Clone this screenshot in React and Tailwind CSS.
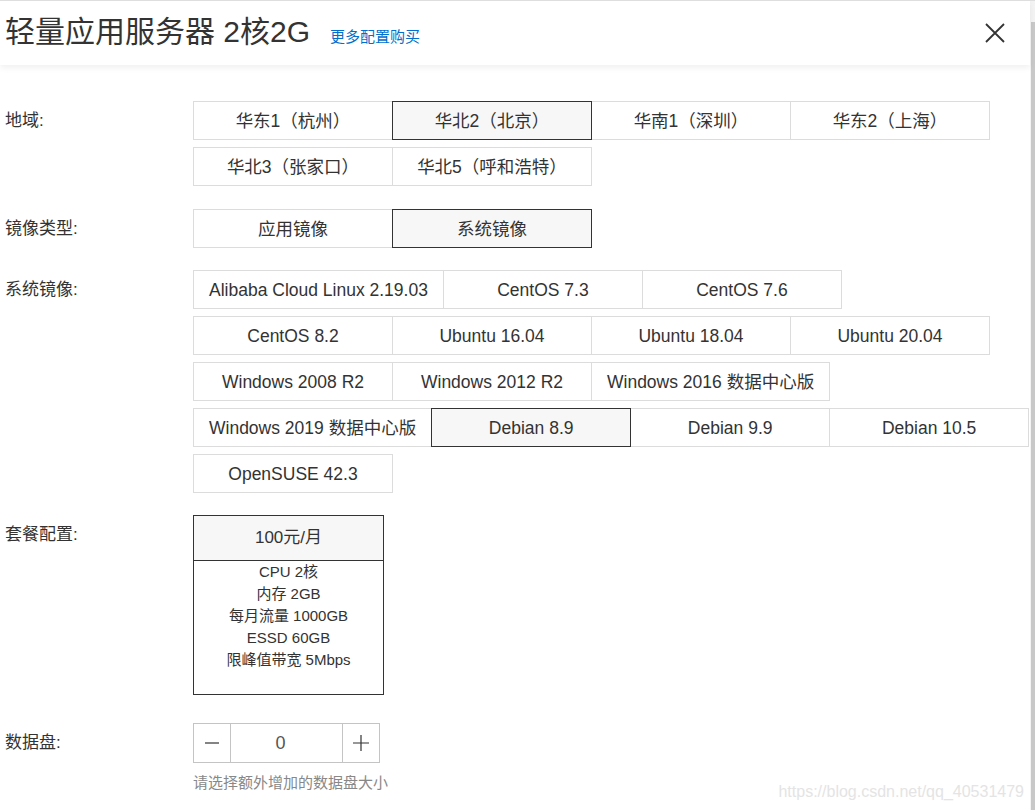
import React from 'react'

const font = { fontFamily: '"Liberation Sans", "Noto Sans CJK SC", sans-serif' }

const regions = [
  [
    ['华东1（杭州）', false],
    ['华北2（北京）', true],
    ['华南1（深圳）', false],
    ['华东2（上海）', false],
  ],
  [
    ['华北3（张家口）', false],
    ['华北5（呼和浩特）', false],
  ],
]

const imageTypes = [
  [
    ['应用镜像', false],
    ['系统镜像', true],
  ],
]

const systems = [
  [
    ['Alibaba Cloud Linux 2.19.03', false],
    ['CentOS 7.3', false],
    ['CentOS 7.6', false],
  ],
  [
    ['CentOS 8.2', false],
    ['Ubuntu 16.04', false],
    ['Ubuntu 18.04', false],
    ['Ubuntu 20.04', false],
  ],
  [
    ['Windows 2008 R2', false],
    ['Windows 2012 R2', false],
    ['Windows 2016 数据中心版', false],
  ],
  [
    ['Windows 2019 数据中心版', false],
    ['Debian 8.9', true],
    ['Debian 9.9', false],
    ['Debian 10.5', false],
  ],
  [['OpenSUSE 42.3', false]],
]

function Option({ label, active }) {
  return (
    <div
      className={
        'relative -mr-px h-[39px] min-w-[200px] px-[15px] pt-[2px] flex items-center justify-center whitespace-nowrap text-[17.5px] text-[#333] border ' +
        (active ? 'z-10 border-[#333] bg-[#f7f7f7]' : 'border-[#dcdcdc] bg-white')
      }
    >
      {label}
    </div>
  )
}

function Row({ label, className = '', children }) {
  return (
    <div className={'flex ' + className}>
      <div className="w-[193px] shrink-0 pl-[5px] h-[39px] flex items-center text-[17px] text-[#333]">{label}</div>
      <div className="flex-1 min-w-0">{children}</div>
    </div>
  )
}

function Options({ rows }) {
  return (
    <div className="flex flex-col gap-y-[7px]">
      {rows.map((row, i) => (
        <div key={i} className="flex">
          {row.map(([l, a]) => (
            <Option key={l} label={l} active={a} />
          ))}
        </div>
      ))}
    </div>
  )
}

export default function App() {
  return (
    <div className="w-[1035px] h-[810px] overflow-hidden bg-white flex border-t border-[#dedede]" style={font}>
      <div className="flex-1 min-w-0 relative">
        <header className="h-16 flex items-center justify-between pl-[5px] pr-[25px] bg-white shadow-[0_3px_6px_rgba(0,0,0,0.06)] relative z-20">
          <div className="flex items-baseline gap-5">
            <h1 className="text-[30px] text-[#333] font-normal leading-none">轻量应用服务器 2核2G</h1>
            <a className="text-[15px] text-[#0070cc]">更多配置购买</a>
          </div>
          <svg width="20" height="20" viewBox="0 0 20 20" className="text-[#333]">
            <path d="M1 1L19 19M19 1L1 19" stroke="currentColor" strokeWidth="1.8" fill="none" />
          </svg>
        </header>

        <div className="pt-9">
          <Row label="地域:">
            <Options rows={regions} />
          </Row>
          <Row label="镜像类型:" className="mt-[23px]">
            <Options rows={imageTypes} />
          </Row>
          <Row label="系统镜像:" className="mt-[22px]">
            <Options rows={systems} />
          </Row>
          <Row label="套餐配置:" className="mt-[22px]">
            <div className="w-[191px] h-[180px] border border-[#333] flex flex-col">
              <div className="h-[45px] shrink-0 bg-[#f7f7f7] border-b border-[#333] flex items-center justify-center text-[17px] text-[#333]">
                100元/月
              </div>
              <div className="flex flex-col items-center text-[15px] leading-[22px] text-[#333]">
                <span>CPU 2核</span>
                <span>内存 2GB</span>
                <span>每月流量 1000GB</span>
                <span>ESSD 60GB</span>
                <span>限峰值带宽 5Mbps</span>
              </div>
            </div>
          </Row>
          <Row label="数据盘:" className="mt-[28px]">
            <div className="flex w-[187px] h-[40px] border border-[#c4c4c4] text-[#333]">
              <div className="w-[37px] flex items-center justify-center border-r border-[#c4c4c4]">
                <svg width="16" height="16" viewBox="0 0 16 16">
                  <path d="M1 8H15" stroke="#333" strokeWidth="1.2" />
                </svg>
              </div>
              <div className="flex-1 flex items-center justify-center pr-[12px] text-[18px] text-[#555]">0</div>
              <div className="w-[37px] flex items-center justify-center border-l border-[#c4c4c4]">
                <svg width="18" height="18" viewBox="0 0 18 18">
                  <path d="M1 9H17M9 1V17" stroke="#333" strokeWidth="1.2" />
                </svg>
              </div>
            </div>
            <p className="mt-[9px] text-[15px] text-[#888]">请选择额外增加的数据盘大小</p>
          </Row>
        </div>

        <div className="absolute right-[6px] bottom-[6px] text-[16px] text-[#e4e4e4]">https://blog.csdn.net/qq_40531479</div>
      </div>
      <div className="w-[5px] shrink-0 bg-[#f3f3f3] flex flex-col pl-[1px]">
        <div className="h-[21px]" />
        <div className="flex-1 bg-[#c8c8c8]" />
      </div>
    </div>
  )
}
